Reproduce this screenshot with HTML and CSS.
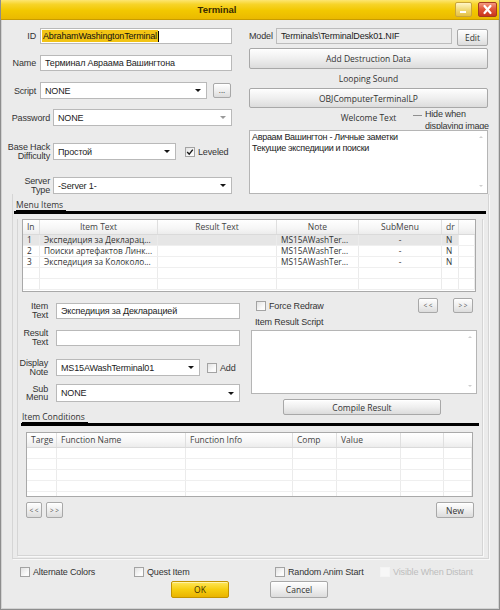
FILE: index.html
```html
<!DOCTYPE html>
<html>
<head>
<meta charset="utf-8">
<title>Terminal</title>
<link rel="stylesheet" href="styles.css">
</head>
<body>
<div class="window">
  <div class="titlebar">
    <div class="title">Terminal</div>
    <div class="tbtns">
      <div class="tb tb-min"><span class="minbar"></span></div>
      <div class="tb tb-close"><svg width="17" height="13" viewBox="0 0 17 13"><path d="M5.5 3 L11.5 10 M11.5 3 L5.5 10" stroke="#fff" stroke-width="2.2" stroke-linecap="round"/></svg></div>
    </div>
  </div>

  <div class="top">
    <div class="lcol">
      <div class="frow r-id"><span class="lab lw35">ID</span><div class="inp w192"><span class="hl">AbrahamWashingtonTerminal</span><span class="caret"></span></div></div>
      <div class="frow r-name"><span class="lab lw35">Name</span><div class="inp w192">Терминал Авраама Вашингтона</div></div>
      <div class="frow r-script"><span class="lab lw35">Script</span><div class="sel w167"><span>NONE</span><span class="arr"></span></div><div class="btn b-dots">...</div></div>
      <div class="frow r-pw"><span class="lab lw49">Password</span><div class="sel w179"><span>NONE</span><span class="arr arr-gray"></span></div></div>
      <div class="frow r-base"><span class="lab lw49 two">Base Hack<br>Difficulty</span><div class="sel w123"><span>Простой</span><span class="arr"></span></div><span class="cb cb-level"><svg width="8" height="8" viewBox="0 0 8 8"><path d="M1.2 4 L3.2 6.2 L6.8 1.6" fill="none" stroke="#1a1a1a" stroke-width="1.4"/></svg></span><span class="cblab">Leveled</span></div>
      <div class="frow r-server"><span class="lab lw49 two">Server<br>Type</span><div class="sel w179"><span>-Server 1-</span><span class="arr"></span></div></div>
    </div>
    <div class="rcol">
      <div class="model-row"><span class="lab mlab">Model</span><div class="inp model-field">Terminals\TerminalDesk01.NIF</div><div class="btn b-edit">Edit</div></div>
      <div class="btn b-wide b-destr">Add Destruction Data</div>
      <div class="caption cap-loop">Looping Sound</div>
      <div class="btn b-wide b-sound">OBJComputerTerminalLP</div>
      <div class="welcome-row">
        <div class="caption cap-welcome">Welcome Text</div>
        <div class="hide-when"><div class="hw-line"><span class="hw-box"></span><span>Hide when</span></div><div class="hw-line2">displaying image</div></div>
      </div>
      <div class="tarea welcome-area">
        <div class="ta-text">Авраам Вашингтон - Личные заметки<br>Текущие экспедиции и поиски</div>
        <div class="vscroll"><span class="up"></span><span class="dn"></span></div>
      </div>
    </div>
  </div>

  <div class="groupO">
    <div class="heading h-menu"><span class="hlabel">Menu Items</span></div>
    <div class="groupI">
      <div class="tbl t1">
        <div class="thead g1">
          <div class="th th-left">In</div><div class="th">Item Text</div><div class="th">Result Text</div><div class="th">Note</div><div class="th">SubMenu</div><div class="th th-left">dr</div><div class="th th-last"></div>
        </div>
        <div class="trow g1 sel-row"><div class="td">1</div><div class="td">Экспедиция за Декларац...</div><div class="td"></div><div class="td">MS15AWashTer...</div><div class="td tc">-</div><div class="td">N</div><div class="td td-last"></div></div>
        <div class="trow g1"><div class="td">2</div><div class="td">Поиски артефактов Линк...</div><div class="td"></div><div class="td">MS15AWashTer...</div><div class="td tc">-</div><div class="td">N</div><div class="td td-last"></div></div>
        <div class="trow g1"><div class="td">3</div><div class="td">Экспедиция за Колоколо...</div><div class="td"></div><div class="td">MS15AWashTer...</div><div class="td tc">-</div><div class="td">N</div><div class="td td-last"></div></div>
        <div class="trow g1"><div class="td"></div><div class="td"></div><div class="td"></div><div class="td"></div><div class="td"></div><div class="td"></div><div class="td td-last"></div></div>
        <div class="trow g1"><div class="td"></div><div class="td"></div><div class="td"></div><div class="td"></div><div class="td"></div><div class="td"></div><div class="td td-last"></div></div>
      </div>

      <div class="items">
        <div class="icol-l">
          <div class="irow ir-text"><span class="lab ilab two">Item<br>Text</span><div class="inp w184">Экспедиция за Декларацией</div></div>
          <div class="irow ir-result"><span class="lab ilab two">Result<br>Text</span><div class="inp w184"></div></div>
          <div class="irow ir-note"><span class="lab ilab two">Display<br>Note</span><div class="sel w144"><span>MS15AWashTerminal01</span><span class="arr"></span></div><span class="cb cb-add"></span><span class="cblab">Add</span></div>
          <div class="irow ir-sub"><span class="lab ilab two">Sub<br>Menu</span><div class="sel w184 h18"><span>NONE</span><span class="arr"></span></div></div>
        </div>
        <div class="icol-r">
          <div class="force-row"><span class="cb cb-force"></span><span class="cblab">Force Redraw</span><div class="btn b-nav b-prev">&lt; &lt;</div><div class="btn b-nav b-next">&gt; &gt;</div></div>
          <div class="lab irs-lab">Item Result Script</div>
          <div class="tarea script-area">
            <div class="ta-text"></div>
            <div class="vscroll"><span class="up"></span><span class="dn"></span></div>
          </div>
          <div class="btn b-compile">Compile Result</div>
        </div>
      </div>

      <div class="heading h-cond"><span class="hlabel">Item Conditions</span></div>
      <div class="tbl t2">
        <div class="thead g2">
          <div class="th th-left">Targe</div><div class="th th-left">Function Name</div><div class="th th-left">Function Info</div><div class="th th-left">Comp</div><div class="th th-left">Value</div><div class="th"></div><div class="th th-last"></div>
        </div>
        <div class="trow g2"><div class="td"></div><div class="td"></div><div class="td"></div><div class="td"></div><div class="td"></div><div class="td"></div><div class="td td-last"></div></div>
        <div class="trow g2"><div class="td"></div><div class="td"></div><div class="td"></div><div class="td"></div><div class="td"></div><div class="td"></div><div class="td td-last"></div></div>
        <div class="trow g2"><div class="td"></div><div class="td"></div><div class="td"></div><div class="td"></div><div class="td"></div><div class="td"></div><div class="td td-last"></div></div>
        <div class="trow g2"><div class="td"></div><div class="td"></div><div class="td"></div><div class="td"></div><div class="td"></div><div class="td"></div><div class="td td-last"></div></div>
        <div class="trow g2"><div class="td"></div><div class="td"></div><div class="td"></div><div class="td"></div><div class="td"></div><div class="td"></div><div class="td td-last"></div></div>
      </div>
      <div class="navrow">
        <div class="navpair"><div class="btn b-nav2">&lt; &lt;</div><div class="btn b-nav2 b-nav2b">&gt; &gt;</div></div>
        <div class="btn b-new">New</div>
      </div>
    </div>
  </div>

  <div class="checks">
    <div class="chk c-alt"><span class="cb"></span><span class="cblab">Alternate Colors</span></div>
    <div class="chk c-quest"><span class="cb"></span><span class="cblab">Quest Item</span></div>
    <div class="chk c-rand"><span class="cb"></span><span class="cblab">Random Anim Start</span></div>
    <div class="chk c-vis"><span class="cb cb-dis"></span><span class="cblab dis">Visible When Distant</span></div>
  </div>
  <div class="okrow">
    <div class="btn b-ok">OK</div>
    <div class="btn b-cancel">Cancel</div>
  </div>
</div>
</body>
</html>
```

FILE: styles.css
```css
html, body {
  margin: 0;
  padding: 0;
  background: #ebebeb;
}
* { box-sizing: border-box; }

.window {
  width: 500px;
  height: 610px;
  background: #ebebeb;
  border: 1px solid #8d8d8d;
  border-top: none;
  box-shadow: inset 1px 0 #d2d2d2, inset -1px 0 #d2d2d2, inset 0 -1px #d2d2d2;
  font-family: "Liberation Sans", Arial, sans-serif;
  font-size: 9px;
  color: #2a2a2a;
  overflow: hidden;
}

/* ---------- title bar ---------- */
.titlebar {
  height: 20px;
  display: grid;
  grid-template-columns: 432px 1fr;
  background: linear-gradient(#fde672 0%, #f7d42a 22%, #f2c800 55%, #eab900 100%);
  border-bottom: 1px solid #c89c00;
}
.title {
  font-family: "Liberation Sans", Arial, sans-serif;
  font-weight: bold;
  font-size: 9.5px;
  line-height: 19px;
  text-align: center;
  color: #3a2b00;
}
.tbtns {
  display: flex;
  padding-left: 22px;
  padding-top: 2px;
  gap: 6px;
}
.tb {
  height: 15px;
  border-radius: 2px;
}
.tb-min {
  width: 17px;
  border: 1px solid #c8a53c;
  background: linear-gradient(#fff6c8, #f1da78 50%, #e5c044);
  display: flex;
  align-items: flex-end;
  padding: 0 0 3px 4px;
}
.minbar {
  display: block;
  width: 6px;
  height: 2px;
  background: #ffffff;
}
.tb-close {
  width: 19px;
  border: 1px solid #a43a20;
  background: linear-gradient(#f59a80, #e1573a 45%, #c9351c);
  display: flex;
  align-items: center;
  justify-content: center;
}

/* ---------- generic controls ---------- */
.lab {
  font-family: "Liberation Sans", Arial, sans-serif;
  font-size: 9px;
  letter-spacing: -0.15px;
  color: #333;
  white-space: nowrap;
}
.lab.two {
  line-height: 8.5px;
  white-space: normal;
}
.inp, .sel {
  height: 16px;
  background: #fff;
  border: 1px solid #b9b9b9;
  display: flex;
  align-items: center;
  padding: 0 4px;
  font-family: "Liberation Sans", Arial, sans-serif;
  font-size: 9px;
  letter-spacing: -0.15px;
  color: #222;
  white-space: nowrap;
  overflow: hidden;
}
.sel {
  height: 17px;
  justify-content: space-between;
  padding-right: 5px;
}
.h18 { height: 18px; }
.arr {
  width: 0;
  height: 0;
  border-left: 3px solid transparent;
  border-right: 3px solid transparent;
  border-top: 3.5px solid #151515;
}
.arr-gray { border-top-color: #9a9a9a; }

.btn {
  border: 1px solid #a8a8a8;
  border-radius: 2px;
  background: linear-gradient(#fefefe, #efefef 50%, #dcdcdc);
  box-shadow: inset 0 1px #fff;
  font-family: "Open Sans", "Noto Sans", sans-serif;
  font-size: 8.5px;
  color: #333;
  display: flex;
  align-items: center;
  justify-content: center;
  white-space: nowrap;
}
.cb {
  width: 10px;
  height: 10px;
  flex: none;
  border: 1px solid #a3a3a3;
  background: linear-gradient(135deg, #e2e2e2, #fbfbfb 70%);
  display: flex;
  align-items: center;
  justify-content: center;
}
.cb-dis {
  border-color: #f4f4f4;
  background: #f7f7f7;
}
.cblab {
  font-family: "Liberation Sans", Arial, sans-serif;
  font-size: 9px;
  letter-spacing: -0.15px;
  color: #333;
  margin-left: 3px;
  white-space: nowrap;
}
.cblab.dis { color: #bdbdbd; }

.w192 { width: 192px; }
.w184 { width: 184px; }
.w179 { width: 179px; }
.w167 { width: 167px; }
.w144 { width: 144px; }
.w123 { width: 123px; }

/* ---------- top area ---------- */
.top {
  display: flex;
  height: 174px;
}
.lcol {
  width: 248px;
  padding-top: 8px;
}
.frow {
  display: flex;
  align-items: center;
}
.lw35 { width: 35px; text-align: right; margin-right: 4px; }
.lw49 { width: 49px; text-align: right; margin-right: 3px; }
.r-name { margin-top: 11px; }
.r-script { margin-top: 11px; }
.r-pw { margin-top: 10px; }
.r-base { margin-top: 17px; }
.r-server { margin-top: 17px; }
.r-id .inp { padding-left: 1px; }
.hl {
  background: #f2c414;
  color: #111;
  padding: 0 1px;
  line-height: 12px;
}
.caret {
  width: 1px;
  height: 11px;
  background: #000;
}
.b-dots {
  width: 18px;
  height: 15px;
  margin-left: 6px;
  font-size: 8px;
  padding-bottom: 3px;
}
.cb-level { margin-left: 9px; }

.rcol {
  width: 239px;
  padding-top: 8px;
  display: flex;
  flex-direction: column;
}
.model-row {
  display: flex;
  align-items: flex-start;
  height: 17px;
}
.mlab { width: 23px; margin-right: 4px; line-height: 16px; }
.model-field {
  width: 176px;
  background: #ececec;
  border-color: #bcbcbc;
}
.b-edit {
  width: 31px;
  height: 17px;
  margin-left: 5px;
  margin-top: 1px;
}
.b-wide { width: 239px; }
.b-destr { height: 21px; margin-top: 3px; }
.b-sound { height: 20px; }
.caption {
  font-family: "Open Sans", "Noto Sans", sans-serif;
  font-size: 8.5px;
  color: #333;
  text-align: center;
}
.cap-loop { height: 19px; line-height: 19px; }
.welcome-row {
  height: 22px;
  position: relative;
}
.cap-welcome { padding-top: 4px; line-height: 12px; }
.hide-when {
  position: absolute;
  left: 164px;
  top: 0;
  width: 78px;
  height: 21px;
  overflow: hidden;
  font-family: "Liberation Sans", Arial, sans-serif;
  font-size: 9px;
  letter-spacing: -0.2px;
  line-height: 12px;
  color: #333;
}
.hw-line {
  display: flex;
  align-items: center;
  white-space: nowrap;
  height: 12px;
}
.hw-line2 {
  padding-left: 12px;
  white-space: nowrap;
  height: 12px;
}
.hw-box {
  width: 9px;
  height: 1px;
  background: #8f8f8f;
  margin-right: 3px;
  margin-top: 3px;
}
.tarea {
  background: #fff;
  border: 1px solid #b5b5b5;
  display: flex;
  position: relative;
}
.welcome-area {
  width: 239px;
  height: 64px;
}
.ta-text {
  flex: 1;
  padding: 1px 2px;
  font-family: "Liberation Sans", Arial, sans-serif;
  font-size: 9px;
  letter-spacing: -0.3px;
  line-height: 11px;
  color: #222;
}
.vscroll {
  width: 12px;
  display: flex;
  flex-direction: column;
  justify-content: space-between;
  align-items: center;
  padding: 5px 0 6px;
}
.vscroll .up, .vscroll .dn {
  width: 0;
  height: 0;
  border-left: 2.5px solid transparent;
  border-right: 2.5px solid transparent;
}
.vscroll .up { border-bottom: 2.5px solid #cfcfcf; }
.vscroll .dn { border-top: 2.5px solid #cfcfcf; }

/* ---------- groups ---------- */
.groupO {
  margin-left: 11px;
  width: 477px;
  height: 365px;
  border: 1px solid #d5d5d5;
  border-top: none;
  box-shadow: 1px 1px #f8f8f8;
}
.heading {
  display: flex;
  align-items: flex-end;
  border-bottom: 3px solid #000;
}
.h-menu {
  margin-left: 1px;
  width: 472px;
  height: 20px;
  padding-left: 2px;
}
.hlabel {
  font-family: "Open Sans", "Noto Sans", sans-serif;
  font-size: 8.5px;
  line-height: 10px;
  color: #333;
  border-bottom: 1px solid #000;
  padding-right: 3px;
}
.groupI {
  margin-left: 4px;
  width: 466px;
  height: 337px;
  border: 1px solid #d5d5d5;
  border-top: none;
  box-shadow: 1px 1px #f8f8f8;
}

/* ---------- tables ---------- */
.tbl {
  background: #fff;
  border: 1px solid #a9a9a9;
  overflow: hidden;
}
.t1 {
  margin-left: 4px;
  margin-top: 5px;
  width: 454px;
  height: 73px;
}
.t2 {
  margin-left: 8px;
  margin-top: 6px;
  width: 447px;
  height: 65px;
}
.g1 { display: grid; grid-template-columns: 17px 118px 119px 82px 83px 17px 1fr; }
.g2 { display: grid; grid-template-columns: 30px 129px 107px 44px 64px 43px 1fr; }
.thead {
  height: 15px;
  background: linear-gradient(#ffffff, #f6f6f6 60%, #ececec);
  border-bottom: 1px solid #dadada;
}
.th {
  border-right: 1px solid #dfdfdf;
  font-family: "Open Sans", "Noto Sans", sans-serif;
  font-size: 8.5px;
  line-height: 14px;
  color: #444;
  text-align: center;
  white-space: nowrap;
  overflow: hidden;
}
.th-left { text-align: left; padding-left: 4px; }
.th-last, .td-last { border-right: none; }
.trow {
  height: 11px;
  border-bottom: 1px solid #efefef;
}
.td {
  border-right: 1px solid #ebebeb;
  font-family: "Open Sans", "Noto Sans", sans-serif;
  font-size: 8.3px;
  line-height: 10px;
  color: #333;
  padding-left: 4px;
  white-space: nowrap;
  overflow: hidden;
}
.td.tc { text-align: center; padding-left: 0; }
.sel-row .td { background: #e6e6e6; }
.sel-row .td-last { background: #fff; }

/* ---------- items ---------- */
.items {
  display: flex;
  margin-top: 6px;
  height: 117px;
}
.icol-l {
  width: 233px;
  padding-top: 4px;
}
.irow { display: flex; align-items: center; }
.ilab {
  width: 30px;
  text-align: right;
  margin-right: 8px;
}
.ir-result { margin-top: 10px; }
.ir-note { margin-top: 13px; }
.ir-sub { margin-top: 8px; }
.cb-add { margin-left: 7px; }

.icol-r {
  width: 226px;
  display: flex;
  flex-direction: column;
}
.force-row {
  display: flex;
  align-items: center;
  height: 15px;
}
.cb-force { margin-left: 5px; }
.b-nav {
  width: 20px;
  height: 15px;
  font-size: 6.5px;
  color: #555;
}
.b-prev { margin-left: auto; }
.b-next { margin-left: 15px; margin-right: 4px; }
.irs-lab {
  height: 17px;
  padding-left: 4px;
  padding-top: 4px;
  line-height: 10px;
}
.script-area {
  width: 226px;
  height: 64px;
}
.b-compile {
  width: 158px;
  height: 16px;
  margin-left: 32px;
  margin-top: 5px;
}

.h-cond {
  margin-left: 3px;
  width: 458px;
  height: 11px;
  padding-left: 1px;
}

.navrow {
  margin-left: 8px;
  margin-top: 5px;
  width: 448px;
  display: flex;
  justify-content: space-between;
}
.navpair { display: flex; gap: 4px; }
.b-nav2 {
  width: 16px;
  height: 16px;
  font-size: 6.5px;
  color: #555;
}
.b-nav2b { width: 17px; }
.b-new {
  width: 38px;
  height: 16px;
}

/* ---------- bottom ---------- */
.checks {
  display: flex;
  margin-top: 8px;
  margin-left: 19px;
  height: 10px;
}
.chk { display: flex; align-items: center; }
.c-alt { width: 114px; }
.c-quest { width: 141px; }
.c-rand { width: 105px; }

.okrow {
  display: flex;
  margin-top: 4px;
  margin-left: 170px;
  gap: 41px;
}
.b-ok {
  width: 58px;
  height: 17px;
  border-color: #c39400;
  background: linear-gradient(#ffe75a, #f6ce10 50%, #e9b400);
  box-shadow: inset 0 1px #fff3a8;
  color: #3a2b00;
}
.b-cancel {
  width: 58px;
  height: 17px;
}
```
